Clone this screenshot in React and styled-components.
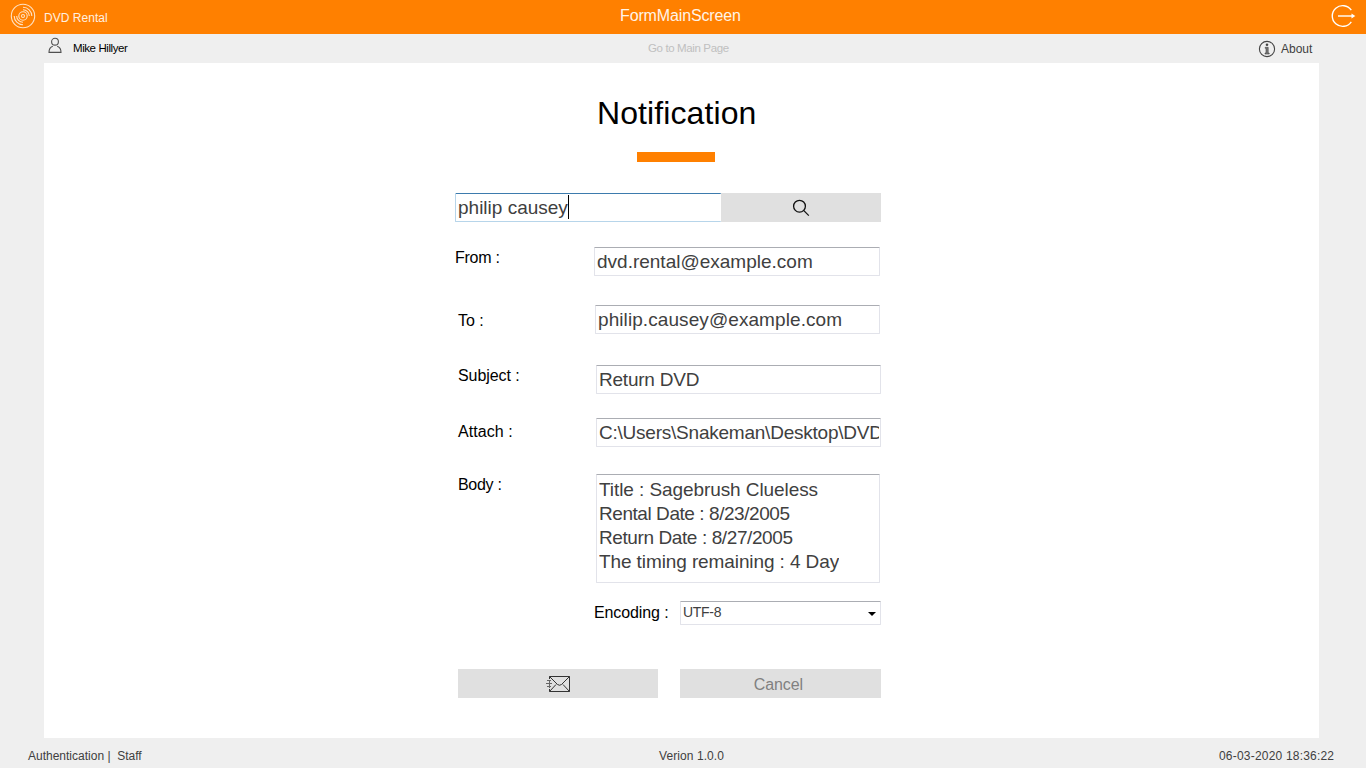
import React from "react";
import styled, { createGlobalStyle } from "styled-components";

const GlobalStyle = createGlobalStyle`
  * { box-sizing: border-box; }
  body {
    margin: 0;
    background: #efefef;
    font-family: "Liberation Sans", Arial, sans-serif;
  }
`;

const Screen = styled.div`
  width: 1366px;
  height: 768px;
  display: flex;
  flex-direction: column;
  overflow: hidden;
`;

const TitleBar = styled.header`
  height: 34px;
  display: grid;
  grid-template-columns: 620px 1fr 36px;
  background: #ff8000;
  color: #fff;
`;

const Brand = styled.div`
  display: flex;
  gap: 8px;
  padding: 3px 0 0 10px;
`;

const ExitButton = styled.div`
  padding-top: 3px;
`;

const InfoBar = styled.nav`
  height: 29px;
  display: grid;
  grid-template-columns: 648px 1fr 108px;
`;

const User = styled.div`
  display: flex;
  gap: 10px;
  padding: 2px 0 0 47px;
`;

const About = styled.a`
  display: flex;
  gap: 5px;
  padding-top: 6px;
`;

const Text = styled.span`
  display: block;
  white-space: pre;
  font-size: ${(p) => p.$size || 12}px;
  line-height: ${(p) => p.$line || 14}px;
  letter-spacing: ${(p) => p.$track || 0}px;
  color: ${(p) => p.$color || "inherit"};
  padding-top: ${(p) => p.$drop || 0}px;
`;

const Panel = styled.main`
  height: 675px;
  width: 1275px;
  margin-left: 44px;
  padding: 30px 0 0 411px;
  background: #fff;
  display: flex;
  flex-direction: column;
`;

const Heading = styled.h1`
  margin: 0 0 0 142px;
  height: 59px;
  font-size: 32px;
  font-weight: 400;
  line-height: 40px;
  letter-spacing: 0.1px;
  color: #000;
`;

const Accent = styled.div`
  width: 78px;
  height: 10px;
  margin: 0 0 31px 182px;
  background: #ff8000;
`;

const Row = styled.div`
  width: ${(p) => p.$width || 426}px;
  display: flex;
  justify-content: space-between;
  align-items: flex-start;
  margin-bottom: ${(p) => p.$after}px;
  padding-left: ${(p) => p.$indent || 0}px;
`;

const Field = styled.div`
  width: ${(p) => p.$width || 285}px;
  height: ${(p) => p.$height || 29}px;
  flex: none;
  display: flex;
  align-items: flex-start;
  overflow: hidden;
  border: 1px solid #e2e3ea;
  border-top-color: #abadb3;
  border-radius: 1px;
  padding: 0 1px 0 2px;
  background: #fff;
  color: #404040;
`;

const SearchField = styled(Field)`
  border-color: #b7d5ea;
  border-top-color: #3d7bad;
  border-right: 0;
`;

const TextArea = styled(Field)`
  flex-direction: column;
  padding-top: 3px;
`;

const FieldText = styled.div`
  overflow: hidden;
  white-space: pre;
  font-size: 19px;
  line-height: ${(p) => p.$line || 27}px;
  letter-spacing: ${(p) => p.$track || 0}px;
`;

const Caret = styled.i`
  width: 1px;
  height: 24px;
  margin-top: 1px;
  background: #000;
`;

const Button = styled.button`
  width: ${(p) => p.$width}px;
  height: 29px;
  flex: none;
  display: flex;
  justify-content: center;
  align-items: center;
  padding: 0;
  border: 0;
  background: #e0e0e0;
  color: #808080;
  font-family: inherit;
`;

const Select = styled(Field)`
  justify-content: space-between;
  padding: 2px 4px 0 2px;
`;

const StatusBar = styled.footer`
  height: 30px;
  display: grid;
  grid-template-columns: 631px 560px 1fr;
  padding: 11px 0 0 28px;
  color: #404040;
`;

const Disc = () => (
  <svg width="26" height="26" viewBox="0 0 26 26" fill="none" stroke="#ffe2c4" strokeWidth="1.1">
    <circle cx="13" cy="13" r="11.7" />
    <circle cx="13" cy="13" r="4.2" />
    <circle cx="13" cy="13" r="1.5" />
    <path d="M13 4.2A8.8 8.8 0 0 1 21.8 13M13 6.7A6.3 6.3 0 0 1 19.3 13M13 21.8A8.8 8.8 0 0 1 4.2 13M13 19.3A6.3 6.3 0 0 1 6.7 13" />
  </svg>
);

const Exit = () => (
  <svg width="28" height="26" viewBox="0 0 28 26" fill="none" stroke="#fff" strokeWidth="1.4">
    <path d="M21.3 7.200A10.400 10.400 0 1 0 21.300 18.800" />
    <path d="M8 13h15" />
    <path d="M21.500 10.500l3.800 2.500-3.800 2.500z" fill="#fff" stroke="none" />
  </svg>
);

const Person = () => (
  <svg width="16" height="18" viewBox="0 0 16 18" fill="none" stroke="#505050" strokeWidth="1.1">
    <circle cx="8" cy="5.700" r="3.400" />
    <path d="M5.800 10.300C3.500 11 2 13 2 16.400h12c0-3.400-1.500-5.400-3.800-6.100" />
  </svg>
);

const Info = () => (
  <svg width="18" height="18" viewBox="0 0 18 18" fill="none" stroke="#454545">
    <circle cx="9" cy="9" r="7.600" strokeWidth="1.1" />
    <circle cx="9" cy="4.700" r="1.300" fill="#454545" stroke="none" />
    <path d="M7.200 7.300h3v5.700h1v1H7v-1h1V8.300h-.8z" strokeWidth="0.600" fill="#777" />
  </svg>
);

const Magnifier = () => (
  <svg width="18" height="18" viewBox="0 0 18 18" fill="none" stroke="#111" strokeWidth="1.3">
    <circle cx="7.500" cy="7.200" r="5.900" />
    <path d="M11.600 11.400l5.200 5.200" />
  </svg>
);

const Envelope = () => (
  <svg width="26" height="18" viewBox="0 0 26 18" fill="none" stroke="#333" strokeWidth="1">
    <path d="M4.500 4V1.500h20v15h-20V14" />
    <path d="M4.500 1.500l8 8q2 1.500 4 0l8-8M4.500 16.500l6.500-7M24.500 16.500l-6.500-7" />
    <path d="M2 5.500h4M1 8.500h6M2 11.500h4M4.500 5v8" stroke="#666" />
  </svg>
);

const Arrow = () => (
  <svg width="8" height="17" viewBox="0 0 8 17">
    <path d="M0 8h8L4 12z" fill="#000" />
  </svg>
);

const Label = ({ children, ...props }) => (
  <Text $size={16} $line={18} $color="#000" {...props}>{children}</Text>
);

const bodyLines = [
  { text: "Title : Sagebrush Clueless", track: -0.08 },
  { text: "Rental Date : 8/23/2005", track: -0.44 },
  { text: "Return Date : 8/27/2005", track: -0.4 },
  { text: "The timing remaining : 4 Day", track: -0.1 },
];

export default function App() {
  return (
    <>
      <GlobalStyle />
      <Screen>
        <TitleBar>
          <Brand>
            <Disc />
            <Text $drop={8} $track={0.03} $color="#fff0e0">DVD Rental</Text>
          </Brand>
          <Text $size={16} $line={18} $drop={7} $track={-0.14} $color="#fff4e8">FormMainScreen</Text>
          <ExitButton><Exit /></ExitButton>
        </TitleBar>
        <InfoBar>
          <User>
            <Person />
            <Text $size={11.5} $track={-0.42} $drop={5} $color="#000">Mike Hillyer</Text>
          </User>
          <Text $drop={7} $size={11.5} $track={-0.37} $color="#c0c0c0">Go to Main Page</Text>
          <About>
            <Info />
            <Text $drop={2} $color="#404040">About</Text>
          </About>
        </InfoBar>

        <Panel>
          <Heading>Notification</Heading>
          <Accent />
          <Row $after={25}>
            <SearchField $width={266}>
              <FieldText>philip causey</FieldText>
              <Caret />
            </SearchField>
            <Button $width={160}><Magnifier /></Button>
          </Row>
          <Row $width={425} $after={29}>
            <Label $drop={2} $track={-0.25}>From :</Label>
            <Field $width={286}><FieldText>dvd.rental@example.com</FieldText></Field>
          </Row>
          <Row $width={425} $indent={3} $after={31}>
            <Label $drop={7}>To :</Label>
            <Field><FieldText $track={0.08}>philip.causey@example.com</FieldText></Field>
          </Row>
          <Row $indent={3} $after={24}>
            <Label $drop={2} $track={-0.06}>Subject :</Label>
            <Field><FieldText $track={-0.22}>Return DVD</FieldText></Field>
          </Row>
          <Row $indent={3} $after={27}>
            <Label $drop={5} $track={0.06}>Attach :</Label>
            <Field><FieldText $track={-0.23}>C:\Users\Snakeman\Desktop\DVD</FieldText></Field>
          </Row>
          <Row $width={425} $indent={3} $after={18}>
            <Label $drop={2} $track={-0.3}>Body :</Label>
            <TextArea $width={284} $height={109}>
              {bodyLines.map((line) => (
                <FieldText key={line.text} $line={24} $track={line.track}>{line.text}</FieldText>
              ))}
            </TextArea>
          </Row>
          <Row $indent={139} $after={44}>
            <Label $drop={3} $track={-0.1}>Encoding :</Label>
            <Select $width={201} $height={24}>
              <Text $size={14} $line={16} $track={-0.3}>UTF-8</Text>
              <Arrow />
            </Select>
          </Row>
          <Row $indent={3} $after={0}>
            <Button $width={200}><Envelope /></Button>
            <Button $width={201}>
              <Text $size={16} $line={18} $drop={2} $track={-0.12}>Cancel </Text>
            </Button>
          </Row>
        </Panel>

        <StatusBar>
          <Text>Authentication |  Staff</Text>
          <Text $track={0.08}>Verion 1.0.0</Text>
          <Text $track={0.2}>06-03-2020 18:36:22</Text>
        </StatusBar>
      </Screen>
    </>
  );
}
